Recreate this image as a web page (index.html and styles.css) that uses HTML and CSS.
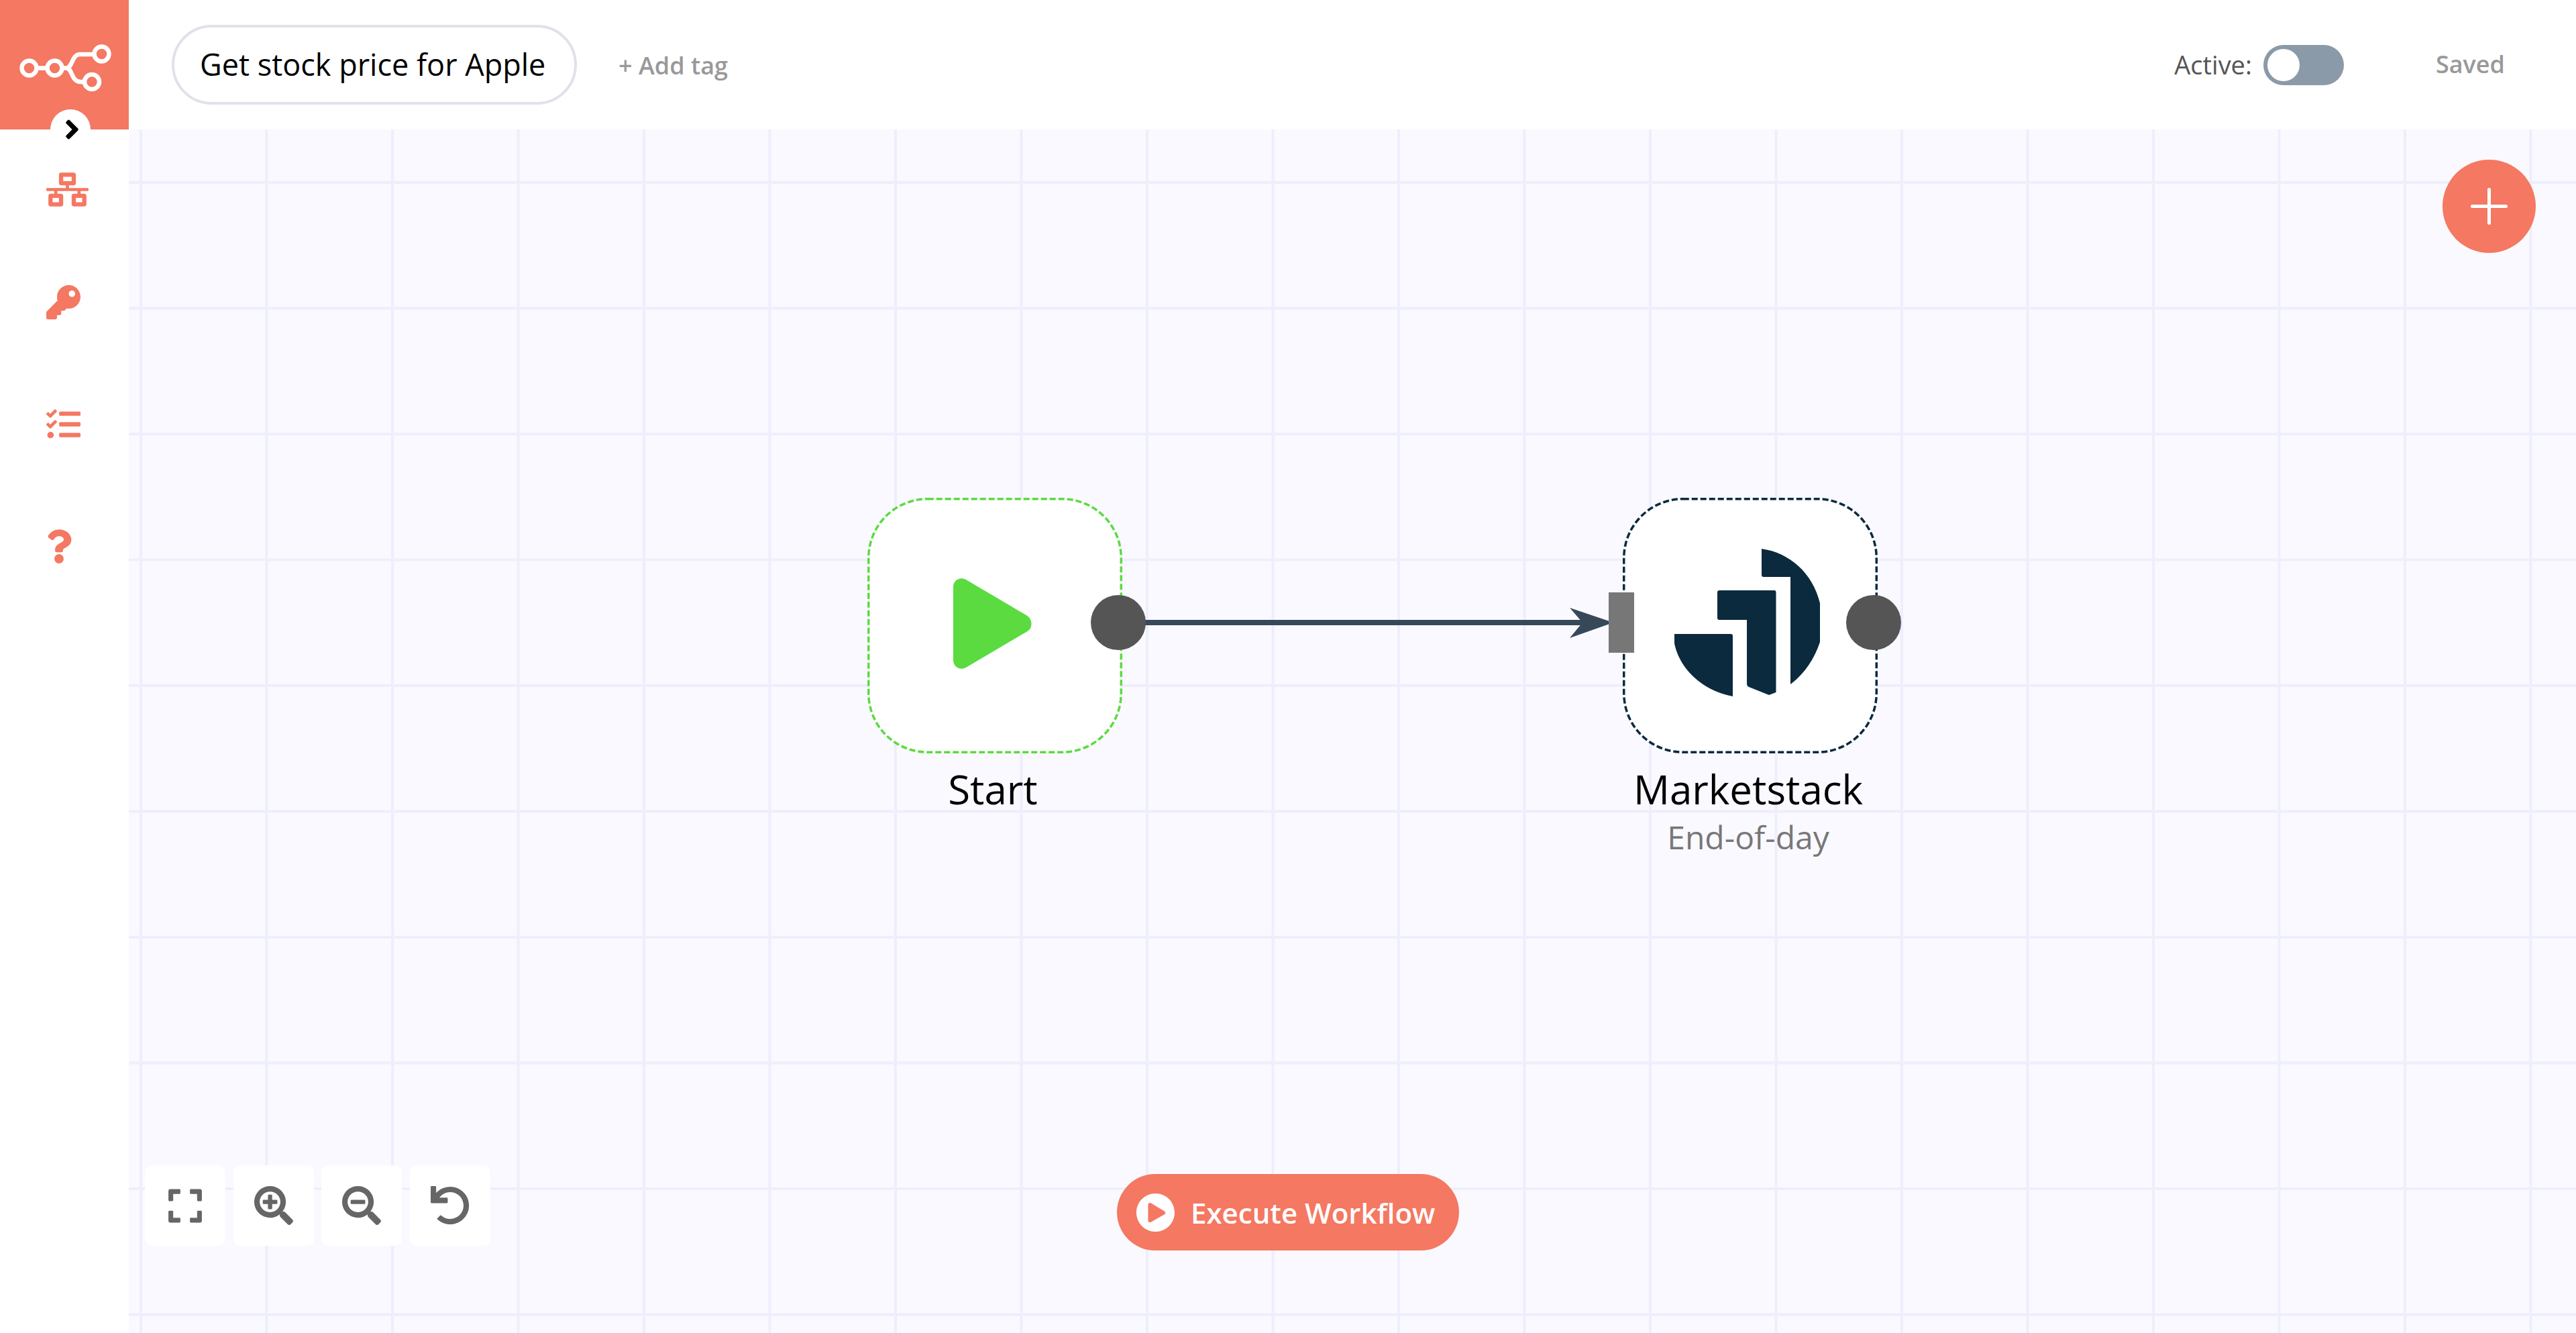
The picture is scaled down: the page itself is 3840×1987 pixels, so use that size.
FILE: index.html
```html
<!DOCTYPE html>
<html lang="en">

<head>
    <meta charset="UTF-8" />
    <title>Get stock price for Apple</title>
    <link rel="stylesheet" href="styles.css">
</head>

<body>
    <div class="app">
        <div class="logo">
            <svg viewBox="0 0 192 193" width="192" height="193" fill="none" stroke="#fff" stroke-width="6.500">
                <circle cx="43.500" cy="101.500" r="11" />
                <circle cx="81.500" cy="101.500" r="11" />
                <circle cx="151.500" cy="80.500" r="11" />
                <circle cx="137" cy="122" r="11" />
                <path d="M55 101.500H70M93 101.500H99C108 101.500 107 81 119 81H140M99 101.500C108 101.500 106 122 120 122H126" />
            </svg>
        </div>

        <header class="topbar">
            <div class="workflow-name">Get stock price for Apple</div>
            <div class="add-tag">+ Add tag</div>
            <div class="active-label">Active:</div>
            <div class="toggle"><span class="knob"></span></div>
            <div class="saved">Saved</div>
        </header>

        <nav class="sidebar">
            <svg class="menu-icon menu-first" viewBox="0 0 640 512" width="63" height="51"><path d="M640 264v-16c0-8.840-7.160-16-16-16H344v-40h72c17.670 0 32-14.330 32-32V32c0-17.670-14.330-32-32-32H224c-17.670 0-32 14.330-32 32v128c0 17.670 14.330 32 32 32h72v40H16c-8.840 0-16 7.160-16 16v16c0 8.840 7.160 16 16 16h104v40H64c-17.670 0-32 14.330-32 32v128c0 17.670 14.330 32 32 32h160c17.670 0 32-14.330 32-32V352c0-17.670-14.330-32-32-32h-56v-40h304v40h-56c-17.670 0-32 14.330-32 32v128c0 17.670 14.330 32 32 32h160c17.670 0 32-14.330 32-32V352c0-17.670-14.330-32-32-32h-56v-40h104c8.840 0 16-7.160 16-16zM256 128V64h128v64H256zm-64 320H96v-64h96v64zm352 0h-96v-64h96v64z"/></svg>
            <svg class="menu-icon" viewBox="0 0 512 512" width="51" height="51"><path d="M512 176.001C512 273.203 433.202 352 336 352c-11.220 0-22.190-1.062-32.827-3.069l-24.012 27.014A23.999 23.999 0 0 1 261.223 384H224v40c0 13.255-10.745 24-24 24h-40v40c0 13.255-10.745 24-24 24H24c-13.255 0-24-10.745-24-24v-78.059c0-6.365 2.529-12.470 7.029-16.971l161.802-161.802C163.108 213.814 160 195.271 160 176 160 78.798 238.797.001 335.999 0 433.488-.001 512 78.511 512 176.001zM336 128c0 26.510 21.490 48 48 48s48-21.490 48-48-21.490-48-48-48-48 21.490-48 48z"/></svg>
            <svg class="menu-icon" viewBox="0 0 512 512" width="51" height="51"><path d="M139.610 35.500a12 12 0 0 0-17 0L58.930 98.810l-22.700-22.120a12 12 0 0 0-17 0L3.530 92.410a12 12 0 0 0 0 17l47.590 47.400a12.780 12.780 0 0 0 17.610 0l15.590-15.620L156.520 69a12.090 12.090 0 0 0 .09-17zm0 159.190a12 12 0 0 0-17 0l-63.680 63.720-22.700-22.100a12 12 0 0 0-17 0L3.530 252a12 12 0 0 0 0 17L51 316.500a12.770 12.770 0 0 0 17.600 0l15.700-15.690 72.200-72.220a12 12 0 0 0 .09-16.900zM64 368c-26.490 0-48.590 21.500-48.590 48S37.530 464 64 464a48 48 0 0 0 0-96zm432 16H208a16 16 0 0 0-16 16v32a16 16 0 0 0 16 16h288a16 16 0 0 0 16-16v-32a16 16 0 0 0-16-16zm0-320H208a16 16 0 0 0-16 16v32a16 16 0 0 0 16 16h288a16 16 0 0 0 16-16V80a16 16 0 0 0-16-16zm0 160H208a16 16 0 0 0-16 16v32a16 16 0 0 0 16 16h288a16 16 0 0 0 16-16v-32a16 16 0 0 0-16-16z"/></svg>
            <svg class="menu-icon" viewBox="0 0 384 512" width="38" height="51"><path d="M202.021 0C122.202 0 70.503 32.703 29.914 91.026c-7.363 10.580-5.093 25.086 5.178 32.874l43.138 32.709c10.373 7.865 25.132 6.026 33.253-4.148 25.049-31.381 43.630-49.449 82.757-49.449 30.764 0 68.816 19.799 68.816 49.631 0 22.552-18.617 34.134-48.993 51.164-35.423 19.860-82.299 44.576-82.299 106.405V320c0 13.255 10.745 24 24 24h72.471c13.255 0 24-10.745 24-24v-5.773c0-42.860 125.268-44.645 125.268-160.627C377.504 66.256 286.902 0 202.021 0zM192 373.459c-38.196 0-69.271 31.075-69.271 69.271 0 38.195 31.075 69.270 69.271 69.270s69.271-31.075 69.271-69.271-31.075-69.270-69.271-69.270z"/></svg>
        </nav>

        <div class="sidebar-toggle">
            <svg viewBox="0 0 256 512" width="23" height="46"><path d="M224.300 273l-136 136c-9.400 9.400-24.600 9.400-33.900 0l-22.600-22.600c-9.400-9.400-9.400-24.600 0-33.900l96.400-96.400-96.400-96.400c-9.400-9.400-9.400-24.600 0-33.900L54.300 103c9.400-9.400 24.600-9.400 33.900 0l136 136c9.500 9.400 9.500 24.600.1 34z"/></svg>
        </div>

        <main class="canvas">
            <svg class="connection" width="3648" height="1794">
                <path d="M1500 735H2175" stroke="#374859" stroke-width="8" fill="none" />
                <path d="M2148 713L2213 735L2148 758L2167 735Z" fill="#374859" />
            </svg>

            <div class="node node-start">
                <div class="node-box">
                    <svg class="node-outline" width="380" height="381"><rect x="1.750" y="1.750" width="376.500" height="377.500" rx="88" /></svg>
                    <svg class="node-icon" viewBox="0 0 117 135" width="117" height="135"><path d="M0 13C0 3 10 -3 19 2L109 55C119 61 119 75 109 80L19 133C10 138 0 132 0 122Z" /></svg>
                    <span class="port-out"></span>
                </div>
                <div class="node-name">Start</div>
            </div>

            <div class="node node-market">
                <div class="node-box">
                    <svg class="node-outline" width="380" height="381"><rect x="1.750" y="1.750" width="376.500" height="377.500" rx="88" /></svg>
                    <svg class="node-icon" viewBox="0 0 217 220" width="217" height="220">
                        <path d="M130 0C172 6 206 36 217 81V139C208 166 193 187 173 202V42H133Q130 42 130 39Z" />
                        <path d="M67 62H149Q151.500 62 151.500 65V214L141 218L111 206Q108 205 108 201V106H67Q64 106 64 103V65Q64 62 67 62Z" />
                        <path d="M0 127H84Q87 127 87 130V220C44 212 8 181 0 141Z" />
                    </svg>
                    <span class="port-in"></span>
                    <span class="port-out"></span>
                </div>
                <div class="node-name">Marketstack</div>
                <div class="node-sub">End-of-day</div>
            </div>

            <div class="add-node">
                <svg viewBox="0 0 55 55" width="55" height="55"><path d="M27.500 2.500V52.500M2.500 27.500H52.500" /></svg>
            </div>

            <div class="zoom-controls">
                <div class="zoom-btn"><svg viewBox="0 0 448 512" width="50" height="57"><path d="M0 180V56c0-13.300 10.700-24 24-24h124c6.600 0 12 5.400 12 12v40c0 6.600-5.400 12-12 12H64v84c0 6.600-5.400 12-12 12H12c-6.600 0-12-5.400-12-12zm288-136v40c0 6.600 5.400 12 12 12h84v84c0 6.600 5.400 12 12 12h40c6.600 0 12-5.400 12-12V56c0-13.300-10.700-24-24-24H300c-6.600 0-12 5.400-12 12zm148 276h-40c-6.600 0-12 5.400-12 12v84h-84c-6.600 0-12 5.400-12 12v40c0 6.600 5.400 12 12 12h124c13.300 0 24-10.700 24-24V332c0-6.600-5.400-12-12-12zM160 468v-40c0-6.600-5.400-12-12-12H64v-84c0-6.600-5.400-12-12-12H12c-6.600 0-12 5.400-12 12v124c0 13.300 10.700 24 24 24h124c6.600 0 12-5.400 12-12z"/></svg></div>
                <div class="zoom-btn"><svg viewBox="0 0 512 512" width="58" height="58"><path d="M304 192v32c0 6.600-5.400 12-12 12h-56v56c0 6.600-5.400 12-12 12h-32c-6.600 0-12-5.400-12-12v-56h-56c-6.600 0-12-5.400-12-12v-32c0-6.600 5.400-12 12-12h56v-56c0-6.600 5.400-12 12-12h32c6.600 0 12 5.400 12 12v56h56c6.600 0 12 5.400 12 12zm201 284.700L476.700 505c-9.400 9.400-24.600 9.400-33.900 0L343 405.300c-4.500-4.500-7-10.600-7-17V372c-35.300 27.600-79.700 44-128 44C93.100 416 0 322.900 0 208S93.100 0 208 0s208 93.100 208 208c0 48.300-16.400 92.700-44 128h16.300c6.400 0 12.500 2.500 17 7l99.700 99.700c9.300 9.400 9.300 24.600 0 34zM344 208c0-75.200-60.800-136-136-136S72 132.800 72 208s60.800 136 136 136 136-60.800 136-136z"/></svg></div>
                <div class="zoom-btn"><svg viewBox="0 0 512 512" width="58" height="58"><path d="M304 192v32c0 6.600-5.400 12-12 12H124c-6.600 0-12-5.400-12-12v-32c0-6.600 5.400-12 12-12h168c6.600 0 12 5.400 12 12zm201 284.700L476.700 505c-9.400 9.400-24.600 9.400-33.900 0L343 405.300c-4.500-4.500-7-10.600-7-17V372c-35.300 27.600-79.700 44-128 44C93.100 416 0 322.900 0 208S93.100 0 208 0s208 93.100 208 208c0 48.300-16.400 92.700-44 128h16.300c6.400 0 12.500 2.500 17 7l99.700 99.700c9.300 9.400 9.300 24.600 0 34zM344 208c0-75.200-60.800-136-136-136S72 132.800 72 208s60.800 136 136 136 136-60.800 136-136z"/></svg></div>
                <div class="zoom-btn"><svg viewBox="0 0 512 512" width="58" height="58"><path d="M212.333 224.333H12c-6.627 0-12-5.373-12-12V12C0 5.373 5.373 0 12 0h48c6.627 0 12 5.373 12 12v78.112C117.773 39.279 184.260 7.470 258.175 8.007c136.906.994 246.448 111.623 246.157 248.532C504.041 393.258 393.120 504 256.333 504c-64.089 0-122.496-24.313-166.510-64.215-5.099-4.622-5.334-12.554-.467-17.420l33.967-33.967c4.474-4.474 11.662-4.717 16.401-.525C170.760 415.336 211.580 432 256.333 432c97.268 0 176-78.716 176-176 0-97.267-78.716-176-176-176-58.496 0-110.280 28.476-142.274 72.333h98.274c6.627 0 12 5.373 12 12v48c0 6.627-5.373 12-12 12z"/></svg></div>
            </div>

            <div class="execute-btn">
                <svg viewBox="8 8 496 496" width="57" height="57"><path d="M256 8C119 8 8 119 8 256s111 248 248 248 248-111 248-248S393 8 256 8zm115.700 272l-176 101c-15.800 8.800-35.700-2.500-35.700-20V152c0-17.400 19.800-28.800 35.700-20l176 107c16.400 9.200 16.400 32.900 0 41z"/></svg>
                <span>Execute Workflow</span>
            </div>
        </main>
    </div>
</body>

</html>
```

FILE: styles.css
```css
body {
    margin: 0;
    font-family: "Open Sans", sans-serif;
    overflow: hidden;
}

.app {
    position: relative;
    display: grid;
    grid-template-columns: 192px 1fr;
    grid-template-rows: 193px 1fr;
    height: 1987px;
    background: #fff;
}

.logo {
    background: #f47862;
}

.logo svg {
    display: block;
}

.topbar {
    display: flex;
    align-items: center;
    padding: 0 106px 0 64px;
    background: #fff;
}

.workflow-name {
    box-sizing: border-box;
    width: 604px;
    height: 119px;
    padding-left: 38px;
    border: 4px solid #dfe2e9;
    border-radius: 60px;
    font-size: 45px;
    line-height: 110px;
    color: #000;
}

.add-tag {
    margin: 2px 0 0 62px;
    font-size: 36px;
    font-weight: 600;
    color: #999;
}

.active-label {
    margin: -2px 0 0 auto;
    font-size: 38px;
    color: #555;
}

.toggle {
    box-sizing: border-box;
    width: 120px;
    height: 60px;
    margin-left: 17px;
    padding: 6px;
    border-radius: 30px;
    background: #8b9aa8;
}

.knob {
    display: block;
    width: 48px;
    height: 48px;
    border-radius: 50%;
    background: #fff;
}

.saved {
    margin: -2px 0 0 137px;
    font-size: 36px;
    font-weight: 600;
    color: #999;
}

.sidebar {
    display: flex;
    flex-direction: column;
    align-items: flex-start;
    gap: 131px;
    padding: 64px 0 0 69px;
    background: #fff;
}

.menu-icon {
    display: block;
    fill: #f47862;
}

.menu-first {
    margin-bottom: -14px;
}

.sidebar-toggle {
    position: absolute;
    left: 75px;
    top: 163px;
    display: flex;
    align-items: center;
    justify-content: center;
    width: 60px;
    height: 60px;
    border-radius: 50%;
    background: #fff;
}

.sidebar-toggle svg {
    margin-left: 5px;
}

.canvas {
    position: relative;
    overflow: hidden;
    background-color: #f9f9ff;
    background-image:
        linear-gradient(to right, #eeeefd 4px, transparent 4px),
        linear-gradient(to bottom, #eeeefd 4px, transparent 4px);
    background-size: 187.5px 187.5px;
    background-position: 16px 77px;
}

.connection {
    position: absolute;
    left: 0;
    top: 0;
}

.node {
    position: absolute;
    top: 549px;
    width: 380px;
    text-align: center;
}

.node-start {
    left: 1101px;
}

.node-market {
    left: 2227px;
}

.node-box {
    position: relative;
    display: flex;
    align-items: center;
    justify-content: center;
    width: 380px;
    height: 381px;
}

.node-outline {
    position: absolute;
    left: 0;
    top: 0;
    fill: #fff;
    stroke-width: 3.5;
    stroke-dasharray: 9 4;
}

.node-icon {
    position: relative;
}

.node-start .node-outline {
    stroke: #5bdb40;
}

.node-start .node-icon {
    margin: -6px 0 0 -8px;
    fill: #5bdb40;
}

.node-market .node-outline {
    stroke: #0b2a3e;
}

.node-market .node-icon {
    margin: -10px 0 0 -10px;
    fill: #0b2a3e;
}

.port-out {
    position: absolute;
    right: -35px;
    top: 145px;
    width: 82px;
    height: 82px;
    border-radius: 50%;
    background: #555;
}

.port-in {
    position: absolute;
    left: -21px;
    top: 141px;
    width: 38px;
    height: 90px;
    background: #777;
}

.node-name {
    margin: 13px 6px 0 0;
    font-size: 60px;
    line-height: 80px;
    white-space: nowrap;
    color: #000;
}

.node-sub {
    margin: 1px 6px 0 0;
    font-size: 48px;
    line-height: 62px;
    white-space: nowrap;
    color: #777;
}

.add-node {
    position: absolute;
    left: 3449px;
    top: 45px;
    display: flex;
    align-items: center;
    justify-content: center;
    width: 139px;
    height: 139px;
    border-radius: 50%;
    background: #f47862;
}

.add-node svg {
    fill: none;
    stroke: #fff;
    stroke-width: 5;
    stroke-linecap: round;
}

.zoom-controls {
    position: absolute;
    left: 24px;
    top: 1544px;
    display: flex;
    gap: 11.500px;
}

.zoom-btn {
    display: flex;
    align-items: center;
    justify-content: center;
    width: 120px;
    height: 120px;
    border-radius: 10px;
    background: #fff;
    fill: #666;
}

.execute-btn {
    position: absolute;
    left: 1473px;
    top: 1557px;
    display: flex;
    align-items: center;
    gap: 24px;
    box-sizing: border-box;
    width: 510px;
    height: 114px;
    padding-left: 29px;
    border-radius: 57px;
    background: #f47862;
    fill: #fff;
    font-size: 42px;
    font-weight: 600;
    color: #fff;
}
```
